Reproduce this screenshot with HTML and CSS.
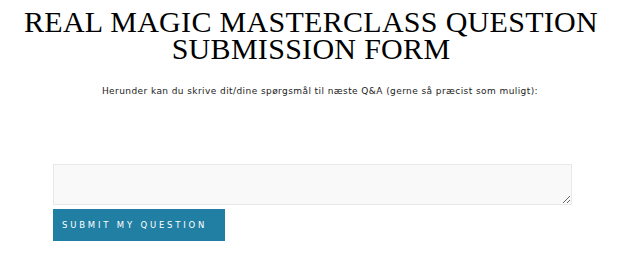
FILE: index.html
```html
<!DOCTYPE html>
<html>
<head>
  <title>Real Magic Masterclass Question Submission Form</title>
  <link rel="stylesheet" href="styles.css">
</head>
<body>
  <div class="page">
    <h1 class="title">Real Magic Masterclass Question Submission Form</h1>
    <p class="intro">Herunder kan du skrive dit/dine spørgsmål til næste Q&amp;A (gerne så præcist som muligt):</p>

    <form class="question-form">
      <textarea class="question-input" name="question"></textarea>
      <button class="submit-btn" type="submit">Submit my question</button>
    </form>
  </div>
</body>
</html>
```

FILE: styles.css
```css
body {
  margin: 0;
  background: #ffffff;
  color: #111111;
  font-family: 'Liberation Sans', Arial, sans-serif;
}
.page {
  width: 580px;
  margin: 0 auto;
  padding-top: 8px;
}
.title {
  font-family: 'Liberation Serif', 'Times New Roman', serif;
  font-weight: normal;
  font-size: 30px;
  line-height: 27px;
  letter-spacing: 0.3px;
  text-align: center;
  text-transform: uppercase;
  margin: 0;
  color: #000000;
}
.intro {
  font-family: 'DejaVu Sans', sans-serif;
  font-size: 9px;
  letter-spacing: 0.42px;
  text-align: center;
  color: #222222;
  margin: 24px 0 0 0;
  padding-left: 18px;
}
.question-form {
  width: 519px;
  margin: 68px 0 0 32px;
}
.question-input {
  display: block;
  box-sizing: border-box;
  width: 519px;
  height: 41px;
  margin: 0;
  background: #f9f9f9;
  border: 1px solid #e8e8e8;
  border-radius: 0;
}
.submit-btn {
  display: block;
  margin-top: 4px;
  width: 172px;
  height: 32px;
  border: none;
  background: #217fa3;
  color: #ffffff;
  font-family: 'DejaVu Sans', sans-serif;
  font-size: 8.5px;
  letter-spacing: 2.8px;
  text-transform: uppercase;
  text-align: left;
  padding: 0 0 0 9px;
}
```
